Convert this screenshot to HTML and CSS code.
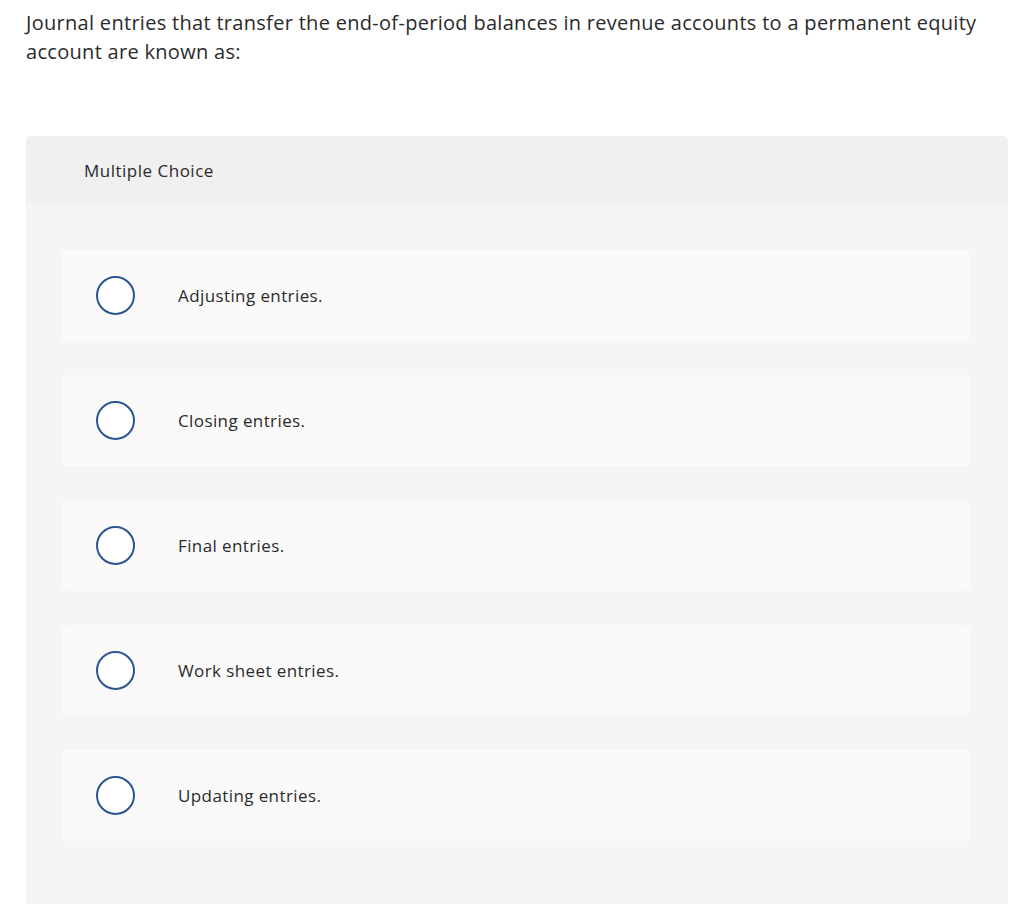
FILE: index.html
```html
<!DOCTYPE html>
<html>
<head>
<meta charset="utf-8">
<link rel="stylesheet" href="styles.css">
</head>
<body>
<div class="page">
  <p class="question">Journal entries that transfer the end-of-period balances in revenue accounts to a permanent equity account are known as:</p>
  <div class="panel">
    <div class="panel-head">Multiple Choice</div>
    <div class="panel-body">
      <div class="option"><span class="radio"></span><span class="label">Adjusting entries.</span></div>
      <div class="option"><span class="radio"></span><span class="label">Closing entries.</span></div>
      <div class="option"><span class="radio"></span><span class="label">Final entries.</span></div>
      <div class="option"><span class="radio"></span><span class="label">Work sheet entries.</span></div>
      <div class="option"><span class="radio"></span><span class="label">Updating entries.</span></div>
    </div>
  </div>
</div>
</body>
</html>
```

FILE: styles.css
```css
html, body {
  margin: 0;
  padding: 0;
  background: #ffffff;
}
body {
  font-family: "Open Sans", Lato, "Liberation Sans", sans-serif;
  color: #2b2b2b;
}
.page {
  padding: 0 16px 0 26px;
}
.question {
  margin: 0;
  padding-top: 8px;
  font-size: 20px;
  line-height: 29px;
  letter-spacing: 0.3px;
}
.panel {
  margin-top: 70px;
  border-radius: 5px 5px 0 0;
  overflow: hidden;
  background: #f5f5f5;
  height: 768px;
}
.panel-head {
  background: #f0f0f0;
  height: 68px;
  display: flex;
  align-items: center;
  padding-left: 58px;
  font-size: 17px;
  letter-spacing: 0.5px;
}
.panel-body {
  padding: 46px 38px 0 35px;
  display: flex;
  flex-direction: column;
  gap: 34px;
}
.option {
  background: #fafafa;
  border-radius: 5px;
  height: 91px;
  display: flex;
  align-items: center;
  padding-left: 35px;
}
.radio {
  width: 35px;
  height: 35px;
  border: 2px solid #2a5590;
  border-radius: 50%;
  background: #ffffff;
  flex: none;
}
.label {
  margin-left: 43px;
  font-size: 17px;
  letter-spacing: 0.4px;
}
```
